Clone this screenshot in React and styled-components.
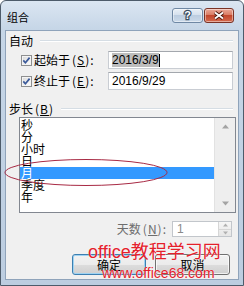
import React from 'react';
import styled, { createGlobalStyle } from 'styled-components';

const GlobalStyle = createGlobalStyle`
  html, body {
    margin: 0;
    padding: 0;
    background: #fff;
  }
  body {
    width: 244px;
    height: 286px;
    overflow: hidden;
  }
`;

const Window = styled.div`
  position: relative;
  width: 244px;
  height: 286px;
  box-sizing: border-box;
  border: 1px solid #4d5b6a;
  border-radius: 6px 6px 0 0;
  background: linear-gradient(#dbe6f2, #c6d6e7 28px, #bccde0);
  display: flex;
  flex-direction: column;
  padding: 0 4px 5px 4px;
  font-family: "Noto Sans CJK SC", sans-serif;
  font-size: 12px;
  color: #000;
  overflow: hidden;
`;

const TitleBar = styled.div`
  height: 29px;
  display: flex;
  align-items: flex-start;
  padding: 0 5px 0 2px;
  flex-shrink: 0;
`;

const Title = styled.div`
  flex: 1;
  padding-top: 10px;
  font-size: 11px;
  line-height: 13px;
`;

const CaptionButtons = styled.div`
  display: flex;
  gap: 1px;
  margin-top: 7px;
`;

const CaptionButton = styled.div`
  width: ${p => p.$width}px;
  height: 15px;
  box-sizing: border-box;
  border: 1px solid ${p => (p.$close ? '#7a3326' : '#6f88a4')};
  border-radius: 3px;
  background: ${p =>
    p.$close
      ? 'linear-gradient(#eaa898, #d8785f 50%, #c2472d 50%, #d56b4e)'
      : 'linear-gradient(#e9f0f7, #d3dfec 50%, #bccde0 50%, #cbdaea)'};
  box-shadow: inset 0 0 0 1px rgba(255, 255, 255, 0.45);
  display: flex;
  align-items: center;
  justify-content: center;
`;

const HelpMark = styled.span`
  font: bold 11px/11px "Liberation Sans", sans-serif;
  color: #fff;
  -webkit-text-stroke: 2.4px #3b4d62;
  paint-order: stroke fill;
`;

const Client = styled.div`
  flex: 1;
  display: flex;
  flex-direction: column;
  background: #f0f0f0;
  border: 1px solid #8fa3ba;
`;

const GroupHeader = styled.div`
  display: flex;
  align-items: center;
  height: 13px;
  margin: ${p => p.$top}px 5px 0 3px;
  line-height: 13px;
`;

const GroupLine = styled.div`
  flex: 1;
  height: 1px;
  margin-left: 7px;
  background: #d5dde4;
  border-bottom: 1px solid #fff;
`;

const DateRow = styled.div`
  display: flex;
  align-items: center;
  height: 18px;
  margin: ${p => p.$top}px 5px 0 15px;
`;

const CheckLabel = styled.label`
  flex: 1;
  display: flex;
  align-items: center;
  gap: 2px;
  line-height: 14px;
`;

// the "(S):" part of a label, spaced a little wider as the bitmap font does
const Shortcut = styled.span`
  margin-left: 2px;
  letter-spacing: 1px;
`;

const Accel = styled.span`
  text-decoration: underline;
`;

const DateInput = styled.div`
  width: 125px;
  height: 18px;
  box-sizing: border-box;
  border: 1px solid #c9cdd3;
  border-top-color: #a3a7ad;
  background: #fff;
  padding: 0 3px;
  display: flex;
  align-items: center;
  font: 12px/14px "Liberation Sans", sans-serif;
`;

const Selected = styled.span`
  background: #bdbdbd;
`;

const Caret = styled.span`
  width: 1px;
  height: 13px;
  background: #000;
`;

const ListBox = styled.div`
  display: flex;
  height: 96px;
  box-sizing: border-box;
  margin: 2px 2px 0 13px;
  border: 1px solid #828790;
  background: #fff;
`;

const Items = styled.div`
  flex: 1;
  padding-top: 1px;
`;

const Item = styled.div`
  height: 12px;
  line-height: 12px;
  padding-left: 1px;
  background: ${p => (p.$selected ? '#3399ff' : 'transparent')};
  color: ${p => (p.$selected ? '#fff' : '#000')};
`;

const ScrollBar = styled.div`
  width: 20px;
  display: flex;
  flex-direction: column;
  justify-content: space-between;
  background: #eeeeee;
  border-left: 1px solid #e2e2e2;
`;

const ScrollArrow = styled.div`
  height: 17px;
  display: flex;
  align-items: center;
  justify-content: center;
`;

const SpinRow = styled.div`
  display: flex;
  align-items: center;
  justify-content: flex-end;
  height: 16px;
  margin: 8px 6px 0 0;
`;

const DisabledLabel = styled.span`
  color: #6d6d6d;
  margin-right: 5px;
  line-height: 14px;
`;

const SpinBox = styled.div`
  width: 60px;
  height: 16px;
  box-sizing: border-box;
  display: flex;
  border: 1px solid #c2c6cb;
  background: #fff;
`;

const SpinValue = styled.div`
  flex: 1;
  padding-left: 4px;
  color: #8a8a8a;
  font: 12px/14px "Liberation Sans", sans-serif;
`;

const SpinButtons = styled.div`
  width: 12px;
  display: flex;
  flex-direction: column;
  border-left: 1px solid #d6d6d6;
  background: linear-gradient(#f6f6f6, #e6e6e6);
`;

const SpinHalf = styled.div`
  flex: 1;
  display: flex;
  align-items: center;
  justify-content: center;
  border-top: ${p => (p.$lower ? '1px solid #d6d6d6' : 'none')};
`;

const ButtonRow = styled.div`
  display: flex;
  justify-content: flex-end;
  gap: 9px;
  margin: 17px 8px 0 0;
`;

const Button = styled.div`
  width: ${p => p.$width}px;
  height: 21px;
  box-sizing: border-box;
  border: 1px solid ${p => (p.$default ? '#3c7fb1' : '#707070')};
  border-radius: 3px;
  background: linear-gradient(#f2f2f2, #ebebeb 50%, #dddddd 50%, #cfcfcf);
  box-shadow: inset 0 0 0 1px ${p => (p.$default ? '#9fd3f2' : 'rgba(255,255,255,0.7)')};
  display: flex;
  align-items: center;
  justify-content: center;
  line-height: 14px;
`;

const Watermark = styled.div`
  position: absolute;
  left: ${p => p.$left}px;
  top: ${p => p.$top}px;
  font-family: "Liberation Sans", "Noto Sans CJK SC", sans-serif;
  font-size: ${p => p.$size}px;
  line-height: ${p => p.$size}px;
  color: #e4202b;
  white-space: nowrap;
  text-shadow: 0 0 1px #fff;
`;

const Annotation = styled.svg`
  position: absolute;
  left: 3px;
  top: 157px;
`;

const CheckBox = () => (
  <svg width="11" height="11" viewBox="0 0 11 11">
    <defs>
      <linearGradient id="cbg" x1="0" y1="0" x2="1" y2="1">
        <stop offset="0" stopColor="#dcdcdc" />
        <stop offset="1" stopColor="#fbfbfb" />
      </linearGradient>
    </defs>
    <rect x="0.5" y="0.5" width="10" height="10" fill="#f4f4f4" stroke="#8e8f8f" />
    <rect x="2" y="2" width="7" height="7" fill="url(#cbg)" />
    <path d="M2.3 5.4 L4.4 7.8 L8.6 2.6" fill="none" stroke="#3b5a9a" strokeWidth="1.7" />
  </svg>
);

const Arrow = ({ up, size = 7, color = '#a3a3a3' }) => (
  <svg width={size} height={Math.ceil(size / 2) + 1} viewBox="0 0 7 4">
    <path d={up ? 'M0 4 L3.5 0 L7 4 Z' : 'M0 0 L3.5 4 L7 0 Z'} fill={color} />
  </svg>
);

const steps = ['秒', '分', '小时', '日', '月', '季度', '年'];

export default function App() {
  return (
    <>
      <GlobalStyle />
      <Window>
        <TitleBar>
          <Title>组合</Title>
          <CaptionButtons>
            <CaptionButton $width={31}>
              <HelpMark>?</HelpMark>
            </CaptionButton>
            <CaptionButton $width={30} $close>
              <svg width="12" height="9" viewBox="0 0 12 9">
                <path d="M2 1.5 L10 7.5 M10 1.5 L2 7.5" stroke="#4a1a10" strokeWidth="3.6" />
                <path d="M2 1.5 L10 7.5 M10 1.5 L2 7.5" stroke="#fff" strokeWidth="1.8" />
              </svg>
            </CaptionButton>
          </CaptionButtons>
        </TitleBar>

        <Client>
          <GroupHeader $top={3}>
            自动
            <GroupLine />
          </GroupHeader>

          <DateRow $top={4}>
            <CheckLabel>
              <CheckBox />
              <span>起始于<Shortcut>(<Accel>S</Accel>):</Shortcut></span>
            </CheckLabel>
            <DateInput>
              <Selected>2016/3/9</Selected>
              <Caret />
            </DateInput>
          </DateRow>
          <DateRow $top={3}>
            <CheckLabel>
              <CheckBox />
              <span>终止于<Shortcut>(<Accel>E</Accel>):</Shortcut></span>
            </CheckLabel>
            <DateInput>2016/9/29</DateInput>
          </DateRow>

          <GroupHeader $top={12}>
            <span>步长<Shortcut>(<Accel>B</Accel>)</Shortcut></span>
            <GroupLine />
          </GroupHeader>

          <ListBox>
            <Items>
              {steps.map(s => (
                <Item key={s} $selected={s === '月'}>{s}</Item>
              ))}
            </Items>
            <ScrollBar>
              <ScrollArrow><Arrow up /></ScrollArrow>
              <ScrollArrow><Arrow /></ScrollArrow>
            </ScrollBar>
          </ListBox>

          <SpinRow>
            <DisabledLabel>天数<Shortcut>(<Accel>N</Accel>):</Shortcut></DisabledLabel>
            <SpinBox>
              <SpinValue>1</SpinValue>
              <SpinButtons>
                <SpinHalf><Arrow up size={5} color="#b0b0b0" /></SpinHalf>
                <SpinHalf $lower><Arrow size={5} color="#b0b0b0" /></SpinHalf>
              </SpinButtons>
            </SpinBox>
          </SpinRow>

          <ButtonRow>
            <Button $width={74} $default>确定</Button>
            <Button $width={75}>取消</Button>
          </ButtonRow>
        </Client>

        <Annotation width="166" height="30" viewBox="0 0 166 30">
          <ellipse cx="82" cy="14.5" rx="81" ry="13" fill="none" stroke="#a82a44" strokeWidth="1" />
        </Annotation>
        <Watermark $left={87} $top={242} $size={18}>office教程学习网</Watermark>
        <Watermark $left={101} $top={265} $size={14}>www.office68.com</Watermark>
      </Window>
    </>
  );
}
